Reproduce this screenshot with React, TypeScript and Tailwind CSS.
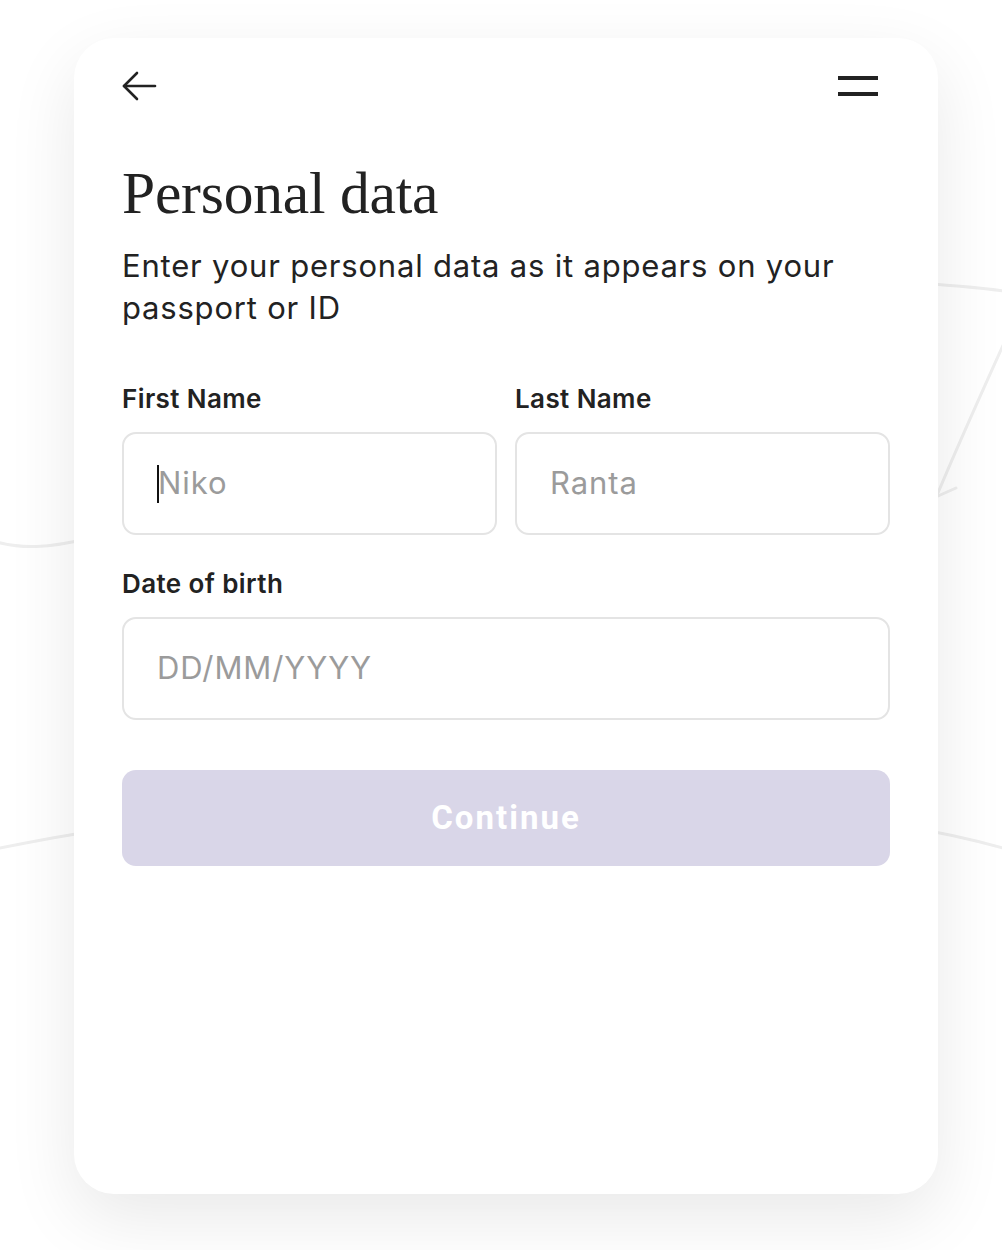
import React from "react";

const Field = ({ label, placeholder, caret }: { label: string; placeholder: string; caret?: boolean }) => (
  <div className="flex flex-col">
    <label className="text-[26px] font-semibold leading-[30px] text-[#222] tracking-[0.4px]">{label}</label>
    <div className="mt-[18px] h-[103px] rounded-[14px] border-2 border-[#e4e4e4] bg-white flex items-center pl-[33px]">
      {caret && <span className="w-[2px] h-[38px] bg-[#111] -mr-[1px]" />}
      <span className="text-[31px] text-[#9b9b9b] tracking-[0.9px]">{placeholder}</span>
    </div>
  </div>
);

export default function App() {
  return (
    <div className="relative min-h-[1250px] w-full bg-white overflow-hidden font-['Inter',_'Liberation_Sans',_sans-serif]">
      {/* background lines */}
      <svg className="absolute inset-0 w-full h-full" viewBox="0 0 1002 1250" fill="none">
        <g stroke="#eeeeee" strokeWidth="3" strokeLinecap="round">
          <path d="M900 282 C950 285 980 287 1010 292" />
          <path d="M1010 330 C985 385 960 440 935 500" />
          <path d="M938 496 L956 488" />
          <path d="M-10 540 C20 550 50 548 90 538" />
          <path d="M-10 850 C30 842 60 836 100 830" />
          <path d="M900 826 C940 832 975 840 1010 850" />
        </g>
      </svg>

      <div className="relative pt-[38px] pl-[74px] pr-[64px]">
        <div className="h-[1156px] rounded-[40px] bg-white shadow-[0_24px_70px_rgba(0,0,0,0.09)] px-[48px] pt-[33px]">
          <div className="flex items-center justify-between h-[30px]">
            <svg width="35" height="30" viewBox="0 0 35 30" fill="none" stroke="#222" strokeWidth="2.6" strokeLinecap="round" strokeLinejoin="round">
              <path d="M33 15 H2" />
              <path d="M15 2 L2 15 L15 28" />
            </svg>
            <div className="flex flex-col gap-[12px] mr-[12px]">
              <span className="block w-[40px] h-[4px] bg-[#222]" />
              <span className="block w-[40px] h-[4px] bg-[#222]" />
            </div>
          </div>

          <h1 className="mt-[62px] text-[59.5px] leading-[60px] text-[#222] font-['Liberation_Serif',_serif] tracking-[-0.2px]">
            Personal data
          </h1>
          <p className="mt-[22px] text-[31px] leading-[42px] text-[#222] tracking-[0.8px] max-w-[760px]">
            Enter your personal data as it appears on your passport or ID
          </p>

          <div className="mt-[55px] grid grid-cols-2 gap-x-[18px]">
            <Field label="First Name" placeholder="Niko" caret />
            <Field label="Last Name" placeholder="Ranta" />
          </div>

          <div className="mt-[34px]">
            <Field label="Date of birth" placeholder="DD/MM/YYYY" />
          </div>

          <button className="mt-[50px] w-full h-[96px] rounded-[14px] bg-[#d9d6e8] text-white text-[33px] font-bold tracking-[2px] font-['Roboto',_sans-serif]">
            Continue
          </button>
        </div>
      </div>
    </div>
  );
}
